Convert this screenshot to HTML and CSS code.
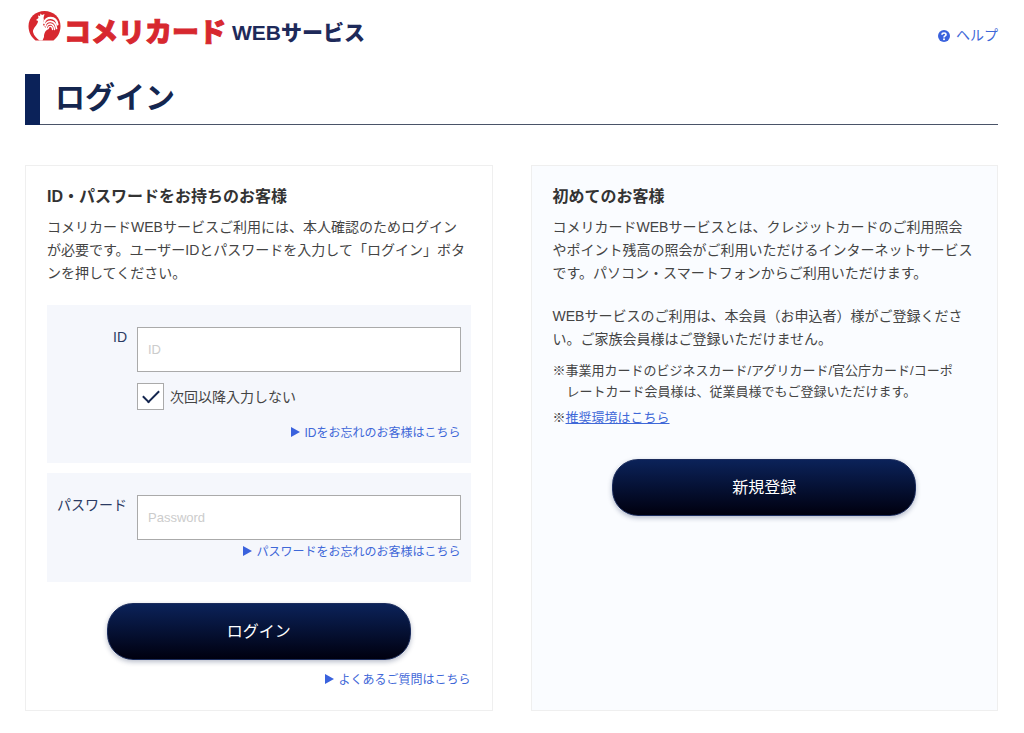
FILE: index.html
```html
<!DOCTYPE html>
<html lang="ja">
<head>
    <meta charset="UTF-8">
    <meta name="viewport" content="width=device-width, initial-scale=1.0">
    <title>ログイン | コメリカードWEBサービス</title>
    <link rel="stylesheet" href="styles.css">
</head>
<body>

    <header class="header">
        <a class="logo" href="#">
            <svg class="logo-mark" viewBox="0 0 34 32" aria-hidden="true">
                <path fill="#d7282f" d="M17 1C26 1 33 7.500 33 16C33 22 30.500 27 26 30.500H8C3.500 27 1 22 1 16C1 7.500 8 1 17 1Z"/>
                <path fill="#fff" d="M8.500 10L11 8L10.500 5.500L12.500 6L13 3.500L14.500 5L17 4L16 8C17 10 15.500 12 15.500 14C16.500 17 18 18 22 18.500C18 20 16.500 23 16.500 27L15 30.500H12C9 28 6.500 26 5.500 22C5 18 10.500 15 10.500 11Z"/>
                <g fill="none" stroke="#fff" stroke-linecap="round">
                    <path stroke-width="2.200" d="M16.500 13C18 6.500 28.500 5.500 30 14.500"/>
                    <path stroke-width="1.700" d="M17.500 16C18.500 9.500 28 9.500 29 18.500"/>
                    <path stroke-width="1.500" d="M19 17.500C19.500 12.500 26.500 12.500 27 19.500"/>
                    <path stroke-width="1.300" d="M20.500 18.500C21 15.500 25 15.500 25 19.500"/>
                </g>
            </svg>
            <span class="logo-card">コメリカード</span>
            <span class="logo-web">WEBサービス</span>
        </a>
        <a class="help" href="#">
            <svg class="help-icon" viewBox="0 0 12 12" aria-hidden="true">
                <circle cx="6" cy="6" r="6" fill="#3a62dd"/>
                <path fill="none" stroke="#fff" stroke-width="1.600" d="M4 4.700C4 2.500 8 2.500 8 4.700C8 6 6 5.900 6 7.400"/>
                <circle cx="6" cy="9.200" r="1" fill="#fff"/>
            </svg>
            ヘルプ
        </a>
    </header>

    <h1 class="page-title">ログイン</h1>

    <main class="columns">
        <section class="card">
            <h2>ID・パスワードをお持ちのお客様</h2>
            <p>コメリカードWEBサービスご利用には、本人確認のためログインが必要です。ユーザーIDとパスワードを入力して「ログイン」ボタンを押してください。</p>

            <form class="login-form">
                <div class="field">
                    <label for="userId">ID</label>
                    <div class="field-body">
                        <input class="text-input" type="text" id="userId" placeholder="ID">
                        <div class="check">
                            <input type="checkbox" id="skipId" checked>
                            <label for="skipId">次回以降入力しない</label>
                        </div>
                        <a class="arrow-link" href="#">IDをお忘れのお客様はこちら</a>
                    </div>
                </div>
                <div class="field">
                    <label for="password">パスワード</label>
                    <div class="field-body">
                        <input class="text-input" type="password" id="password" placeholder="Password">
                        <a class="arrow-link" href="#">パスワードをお忘れのお客様はこちら</a>
                    </div>
                </div>
                <button class="btn" type="submit">ログイン</button>
            </form>
            <a class="arrow-link" href="#">よくあるご質問はこちら</a>
        </section>

        <section class="card card-new">
            <h2>初めてのお客様</h2>
            <p>コメリカードWEBサービスとは、クレジットカードのご利用照会やポイント残高の照会がご利用いただけるインターネットサービスです。パソコン・スマートフォンからご利用いただけます。</p>
            <p>WEBサービスのご利用は、本会員（お申込者）様がご登録ください。ご家族会員様はご登録いただけません。</p>
            <ul class="notes">
                <li>※事業用カードのビジネスカード/アグリカード/官公庁カード/コーポレートカード会員様は、従業員様でもご登録いただけます。</li>
                <li>※<a href="#">推奨環境はこちら</a></li>
            </ul>
            <button class="btn" type="button">新規登録</button>
        </section>
    </main>

</body>
</html>
```

FILE: styles.css
```css
* {
    box-sizing: border-box;
}

body {
    margin: 0;
    padding: 10px 26px 23px 25px;
    font-family: "Liberation Sans", "Noto Sans CJK JP", sans-serif;
    font-size: 14px;
    line-height: 23px;
    color: #444;
    background-color: #fff;
}

h1, h2, p, ul {
    margin: 0;
    padding: 0;
}

a {
    color: #3f68d8;
}

/* header */
.header {
    display: flex;
    justify-content: space-between;
    align-items: flex-start;
    height: 64px;
}

.logo {
    display: flex;
    align-items: flex-start;
    padding-left: 2px;
    font-weight: 900;
    line-height: 24px;
    text-decoration: none;
    white-space: nowrap;
}

.logo-mark {
    width: 35px;
    height: 32px;
    margin-right: 2px;
}

.logo-card {
    margin-top: 11px;
    font-size: 27px;
    color: #d7282f;
    -webkit-text-stroke: 1px #d7282f;
}

.logo-web {
    margin: 11px 0 0 6px;
    font-size: 21px;
    color: #1e2a5a;
}

.help {
    display: flex;
    align-items: center;
    gap: 6px;
    margin-top: 14px;
    text-decoration: none;
}

.help-icon {
    width: 12px;
    height: 12px;
}

.page-title {
    padding: 0 0 4px 15px;
    border-left: 15px solid #0b2259;
    font-size: 30px;
    line-height: 47px;
    color: #14264f;
    box-shadow: inset 0 -1px #4a5468;
}

/* cards */
.columns {
    display: grid;
    grid-template-columns: 1fr 1fr;
    gap: 38px;
    margin-top: 40px;
}

.card {
    display: flex;
    flex-direction: column;
    padding: 21px 21px 20px;
    border: 1px solid #efefef;
}

.card-new {
    background-color: #fafcff;
}

.card h2 {
    margin-bottom: 9px;
    font-size: 16px;
    line-height: 20px;
    color: #333;
}

.card p {
    padding-right: 2px;
}

.card p + p {
    margin-top: 20px;
}

/* login form */
.login-form {
    display: flex;
    flex-direction: column;
    gap: 10px;
    margin-top: 20px;
}

.field {
    display: grid;
    grid-template-columns: 70px 1fr;
    gap: 10px;
    padding: 22px 10px 20px;
    line-height: 20px;
    background-color: #f5f7fc;
}

.field > label {
    color: #2a3a63;
    text-align: right;
    white-space: nowrap;
}

.field-body {
    display: flex;
    flex-direction: column;
}

.text-input {
    width: 100%;
    height: 45px;
    padding: 0 10px;
    border: 1px solid #aaa;
    border-radius: 0;
    font-family: inherit;
    font-size: 13px;
    background-color: #fff;
}

.text-input::placeholder {
    color: #ccc;
}

.check {
    display: flex;
    align-items: center;
    gap: 6px;
    margin: 11px 0;
}

.check input {
    appearance: none;
    display: grid;
    place-items: center;
    width: 27px;
    height: 27px;
    margin: 0;
    border: 1px solid #aaa;
    background-color: #fff;
}

.check input:checked::before {
    content: "";
    width: 14px;
    height: 7px;
    margin-bottom: 4px;
    border-left: 2px solid #14264f;
    border-bottom: 2px solid #14264f;
    transform: rotate(-45deg);
}

.arrow-link {
    align-self: flex-end;
    margin-top: 2px;
    font-size: 12px;
    line-height: 20px;
    text-decoration: none;
}

.arrow-link::before {
    content: "";
    display: inline-block;
    margin-right: 4px;
    border-left: 9px solid #3a62dd;
    border-top: 5px solid transparent;
    border-bottom: 5px solid transparent;
}

.btn {
    align-self: center;
    width: 304px;
    max-width: 100%;
    height: 57px;
    padding: 0 0 4px;
    border: 1px solid #1b2c5c;
    border-radius: 26px;
    font-family: inherit;
    font-size: 16px;
    color: #fff;
    background: linear-gradient(#0b2259, #00000f);
    box-shadow: 0 2px 5px rgba(20, 38, 79, 0.3);
}

.login-form .btn {
    margin-top: 11px;
}

.card > .arrow-link {
    margin-top: 10px;
}

/* new customer notes */
.notes {
    margin: 9px 0 31px;
    padding-right: 12px;
    font-size: 13px;
    line-height: 21px;
    list-style: none;
}

.notes li {
    padding-left: 14px;
    text-indent: -14px;
}

.notes li + li {
    margin-top: 5px;
}
```
